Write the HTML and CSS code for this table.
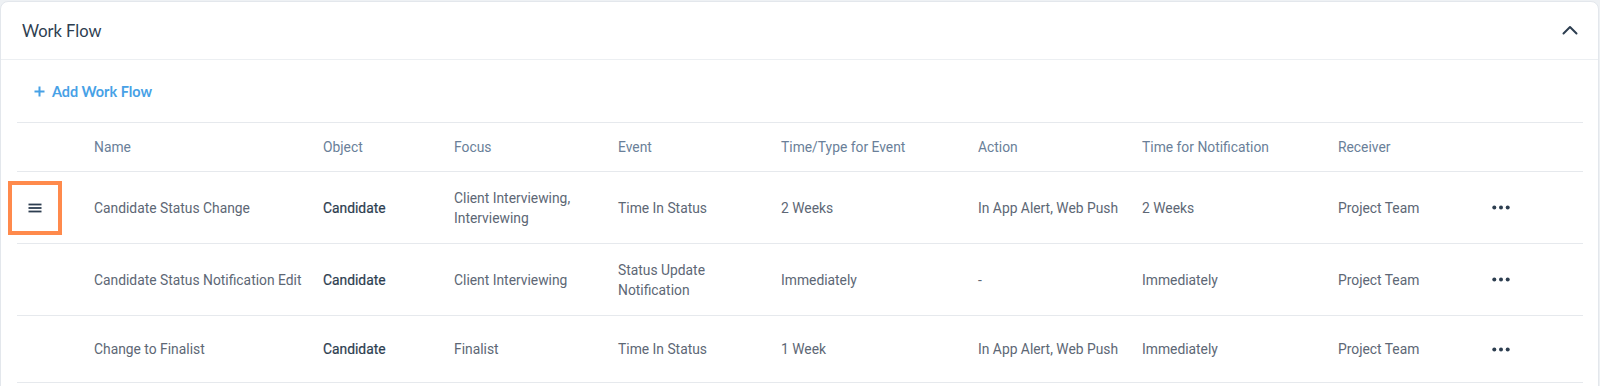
FILE: index.html
```html
<!DOCTYPE html>
<html>
<head>
<meta charset="utf-8">
<link rel="stylesheet" href="styles.css">
</head>
<body>
<div class="card">
  <div class="card-header">
    <h2 class="card-title">Work Flow</h2>
    <svg class="chevron" width="16" height="10" viewBox="0 0 16 10"><path d="M1.5 8.5 L8 2 L14.5 8.5" fill="none" stroke="#2d3e50" stroke-width="2" stroke-linecap="round" stroke-linejoin="round"/></svg>
  </div>
  <div class="card-body">
    <div class="add-row">
      <button class="add-btn"><svg width="11" height="11" viewBox="0 0 11 11"><path d="M5.5 0.5 V10.5 M0.5 5.5 H10.5" stroke="#47a1e6" stroke-width="2"/></svg><span>Add Work Flow</span></button>
    </div>
    <table class="wf-table">
      <colgroup>
        <col class="c0"><col class="c1"><col class="c2"><col class="c3"><col class="c4"><col class="c5"><col class="c6"><col class="c7"><col class="c8"><col class="c9">
      </colgroup>
      <thead>
        <tr>
          <th></th><th>Name</th><th>Object</th><th>Focus</th><th>Event</th><th>Time/Type for Event</th><th>Action</th><th>Time for Notification</th><th>Receiver</th><th></th>
        </tr>
      </thead>
      <tbody>
        <tr class="tall">
          <td class="drag"><span class="drag-btn"><svg width="14" height="10" viewBox="0 0 14 10"><rect x="0.5" y="0.6" width="13" height="1.8" fill="#2d3e50"/><rect x="0.5" y="4.1" width="13" height="1.8" fill="#2d3e50"/><rect x="0.5" y="7.6" width="13" height="1.8" fill="#2d3e50"/></svg></span></td>
          <td>Candidate Status Change</td>
          <td class="obj">Candidate</td>
          <td>Client Interviewing,<br>Interviewing</td>
          <td>Time In Status</td>
          <td>2 Weeks</td>
          <td>In App Alert, Web Push</td>
          <td>2 Weeks</td>
          <td>Project Team</td>
          <td class="more"><svg width="18" height="5" viewBox="0 0 18 5"><circle cx="2.3" cy="2.5" r="2" fill="#2d3e50"/><circle cx="9" cy="2.5" r="2" fill="#2d3e50"/><circle cx="15.7" cy="2.5" r="2" fill="#2d3e50"/></svg></td>
        </tr>
        <tr class="tall">
          <td></td>
          <td>Candidate Status Notification Edit</td>
          <td class="obj">Candidate</td>
          <td>Client Interviewing</td>
          <td>Status Update<br>Notification</td>
          <td>Immediately</td>
          <td>-</td>
          <td>Immediately</td>
          <td>Project Team</td>
          <td class="more"><svg width="18" height="5" viewBox="0 0 18 5"><circle cx="2.3" cy="2.5" r="2" fill="#2d3e50"/><circle cx="9" cy="2.5" r="2" fill="#2d3e50"/><circle cx="15.7" cy="2.5" r="2" fill="#2d3e50"/></svg></td>
        </tr>
        <tr>
          <td></td>
          <td>Change to Finalist</td>
          <td class="obj">Candidate</td>
          <td>Finalist</td>
          <td>Time In Status</td>
          <td>1 Week</td>
          <td>In App Alert, Web Push</td>
          <td>Immediately</td>
          <td>Project Team</td>
          <td class="more"><svg width="18" height="5" viewBox="0 0 18 5"><circle cx="2.3" cy="2.5" r="2" fill="#2d3e50"/><circle cx="9" cy="2.5" r="2" fill="#2d3e50"/><circle cx="15.7" cy="2.5" r="2" fill="#2d3e50"/></svg></td>
        </tr>
      </tbody>
    </table>
  </div>
</div>
</body>
</html>
```
FILE: styles.css
```css
html, body {
  margin: 0;
  padding: 0;
  background: #eef1f4;
}
body {
  padding-top: 1px;
  padding-right: 1px;
  height: 385px;
  overflow: hidden;
}
.card {
  background: #ffffff;
  border: 1px solid #e3e7ec;
  border-radius: 8px;
  height: 400px;
}
.card-header {
  height: 57px;
  display: flex;
  align-items: center;
  justify-content: space-between;
  padding: 0 20px 0 21px;
  border-bottom: 1px solid #eceff2;
}
.card-title {
  margin: 0;
  font-family: Lato, "Liberation Sans", sans-serif;
  font-weight: 400;
  font-size: 16.5px;
  color: #2d3e50;
}
.chevron {
  display: block;
  margin-top: -2px;
}
.card-body {
  padding: 0 15px 0 16px;
}
.add-row {
  height: 62px;
  display: flex;
  align-items: center;
  padding-left: 17px;
}
.add-btn {
  display: flex;
  align-items: center;
  gap: 7px;
  border: 0;
  background: none;
  padding: 0;
  margin-top: 1px;
  font-family: Lato, "Liberation Sans", sans-serif;
  font-weight: 700;
  font-size: 14.4px;
  color: #47a1e6;
}
.add-btn svg {
  display: block;
}
.wf-table {
  width: 1566px;
  border-collapse: collapse;
  table-layout: fixed;
  font-family: Roboto, "Liberation Sans", sans-serif;
  font-size: 13.85px;
  line-height: 20px;
}
.c0 { width: 61px; }
.c1 { width: 229px; }
.c2 { width: 131px; }
.c3 { width: 164px; }
.c4 { width: 163px; }
.c5 { width: 197px; }
.c6 { width: 164px; }
.c7 { width: 196px; }
.c8 { width: 154px; }
.c9 { width: 107px; }
.wf-table th {
  height: 48px;
  padding: 0 0 0 16px;
  text-align: left;
  font-weight: 400;
  color: #6a7f99;
  border-top: 1px solid #e6e9ed;
  border-bottom: 1px solid #e6e9ed;
}
.wf-table td {
  height: 66px;
  padding: 0 0 0 16px;
  color: #5d6775;
  border-bottom: 1px solid #e6e9ed;
  vertical-align: middle;
  white-space: nowrap;
  overflow: visible;
}
.wf-table tr.tall td {
  height: 71px;
}
.wf-table td.obj {
  color: #2d3e50;
  font-weight: 400;
  -webkit-text-stroke: 0.2px #2d3e50;
}
.wf-table td.drag {
  padding: 0;
}
.drag-btn {
  box-sizing: border-box;
  width: 54px;
  height: 54px;
  margin-left: -9px;
  border: 4px solid #ff8a4c;
  display: flex;
  align-items: center;
  justify-content: center;
  padding-right: 1px;
}
.drag-btn svg {
  display: block;
}
.wf-table td.more svg {
  display: block;
}
```
